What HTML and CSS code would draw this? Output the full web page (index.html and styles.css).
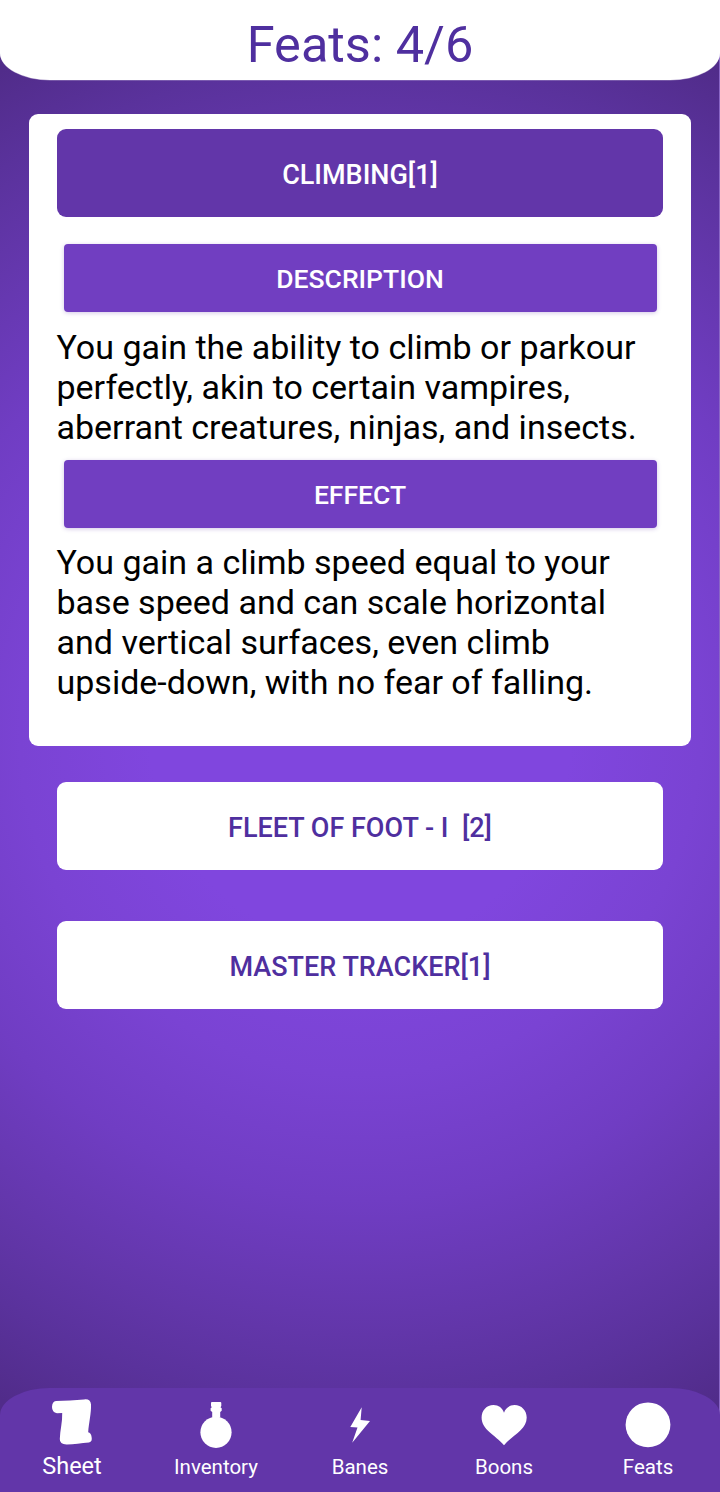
FILE: index.html
```
<!DOCTYPE html>
<html lang="en">
<head>
<meta charset="utf-8">
<title>Feats</title>
<link rel="stylesheet" href="styles.css">
</head>
<body>
<div class="app">
  <header class="header"><h1 class="title">Feats: 4/6</h1></header>
  <main class="content">
    <section class="card">
      <button class="feat feat-open">CLIMBING[1]</button>
      <button class="section-btn">DESCRIPTION</button>
      <p class="text">You gain the ability to climb or parkour<br>perfectly, akin to certain vampires,<br>aberrant creatures, ninjas, and insects.</p>
      <button class="section-btn">EFFECT</button>
      <p class="text">You gain a climb speed equal to your<br>base speed and can scale horizontal<br>and vertical surfaces, even climb<br>upside-down, with no fear of falling.</p>
    </section>
    <div class="list">
      <button class="feat">FLEET OF FOOT - I  [2]</button>
      <button class="feat">MASTER TRACKER[1]</button>
    </div>
  </main>
  <nav class="nav">
    <a class="tab tab-active">
      <svg class="icon" viewBox="0 0 48 52"><path d="M8 5C17 4.600 27 4.300 36 3.400Q42.600 2.600 43 8.500C43.400 17 40.800 27 40.200 36.300Q43 36.800 43.600 41Q44.600 45.800 41 46.400C33 47 26 48.200 19 48.400Q11.600 48.600 11.800 43C12 34 14.600 26 14.200 17L9 17.300Q4 16.400 4 11Q4.200 5.300 8 5Z"/></svg>
      <span class="label">Sheet</span>
    </a>
    <a class="tab">
      <svg class="icon" viewBox="0 0 48 52"><path d="M20 6h8.300q1 0 1 1v3l-.8 1.200 1.200 1v2.600l-1.500 1.200v5.400h-8v-5.400l-1.600-1.200v-2.600l1.200-1-.8-1.200v-3q0-1 1-1z"/><circle cx="24" cy="36.300" r="15.600"/></svg>
      <span class="label">Inventory</span>
    </a>
    <a class="tab">
      <svg class="icon" viewBox="0 0 48 52"><path d="M25.700 11.200L14.300 31L21.500 31.500L16.200 46.800L34 25L24.600 24Z"/></svg>
      <span class="label">Banes</span>
    </a>
    <a class="tab">
      <svg class="icon" viewBox="0 0 48 52"><path d="M24 16.700C22.500 12 18.500 9 13.500 9C6.500 9 1.600 14.500 1.600 21.500C1.600 34 15 38.500 24 49.300C33 38.500 46.700 34 46.700 21.500C46.700 14.500 41.500 9 34.500 9C29.500 9 25.500 12 24 16.700Z"/></svg>
      <span class="label">Boons</span>
    </a>
    <a class="tab">
      <svg class="icon" viewBox="0 0 48 52"><circle cx="24" cy="28.800" r="22.400"/></svg>
      <span class="label">Feats</span>
    </a>
  </nav>
</div>
</body>
</html>
```

FILE: styles.css
```
* { box-sizing: border-box; }
body { margin: 0; font-family: Roboto, sans-serif; }
.app {
  width: 720px;
  height: 1492px;
  display: flex;
  flex-direction: column;
  overflow: hidden;
  background:
    linear-gradient(#8a66c6, #8a66c6) right / 1px 100% no-repeat,
    radial-gradient(circle at 360px 735px, #8046de 0, #8046de 210px, #7a43d3 340px, #703dc3 465px, #6236a9 600px, #5a329c 670px, #512c8a 755px);
}
.header {
  height: 80px;
  flex: none;
  display: flex;
  justify-content: center;
  background: #fff;
  border-radius: 0 0 50px 50px / 0 0 27px 27px;
  box-shadow: 0 .5px 0 rgba(255, 255, 255, .4);
}
.title {
  margin: 0;
  padding-top: 15px;
  font-size: 50.500px;
  line-height: 60px;
  font-weight: 400;
  color: #4f2f9f;
}
.content {
  flex: 1;
  padding: 34px 29px 0;
}
.card {
  height: 632px;
  padding: 15px 28px 0;
  display: flex;
  flex-direction: column;
  background: #fff;
  border-radius: 9px;
}
button {
  border: 0;
  padding: 0;
  font-family: inherit;
  font-weight: 500;
}
.feat {
  height: 88px;
  flex: none;
  padding-top: 3px;
  border-radius: 9px;
  background: #fff;
  color: #4f2f9f;
  font-size: 27px;
  white-space: pre;
}
.feat-open {
  margin-bottom: 27px;
  background: #6236a9;
  color: #fff;
}
.section-btn {
  height: 68px;
  flex: none;
  margin: 0 6.500px;
  padding-top: 1px;
  border-radius: 4px;
  background: #713ec1;
  box-shadow: 0 1px 4px rgba(98, 54, 169, .28);
  color: #fff;
  font-size: 26.500px;
}
.text {
  margin: 0 0 0 -.5px;
  padding: 15px 0 13px;
  font-size: 34px;
  line-height: 40px;
  color: #000;
  white-space: nowrap;
}
.section-btn + .text:last-child {
  padding-top: 14px;
}
.list {
  display: flex;
  flex-direction: column;
  gap: 51px;
  padding: 36px 28px 0;
}
.nav {
  height: 104px;
  flex: none;
  display: grid;
  grid-template-columns: repeat(5, 1fr);
  padding-top: 8px;
  background: #6236a9;
  border-radius: 50px 50px 0 0 / 27px 27px 0 0;
}
.tab {
  display: flex;
  flex-direction: column;
  align-items: center;
  color: #fff;
}
.icon {
  width: 48px;
  height: 52px;
  fill: #fff;
}
.label {
  margin-top: 7px;
  font-size: 20.500px;
  line-height: 24px;
}
.tab-active .label {
  margin-top: 6px;
  font-size: 23.500px;
}
```
